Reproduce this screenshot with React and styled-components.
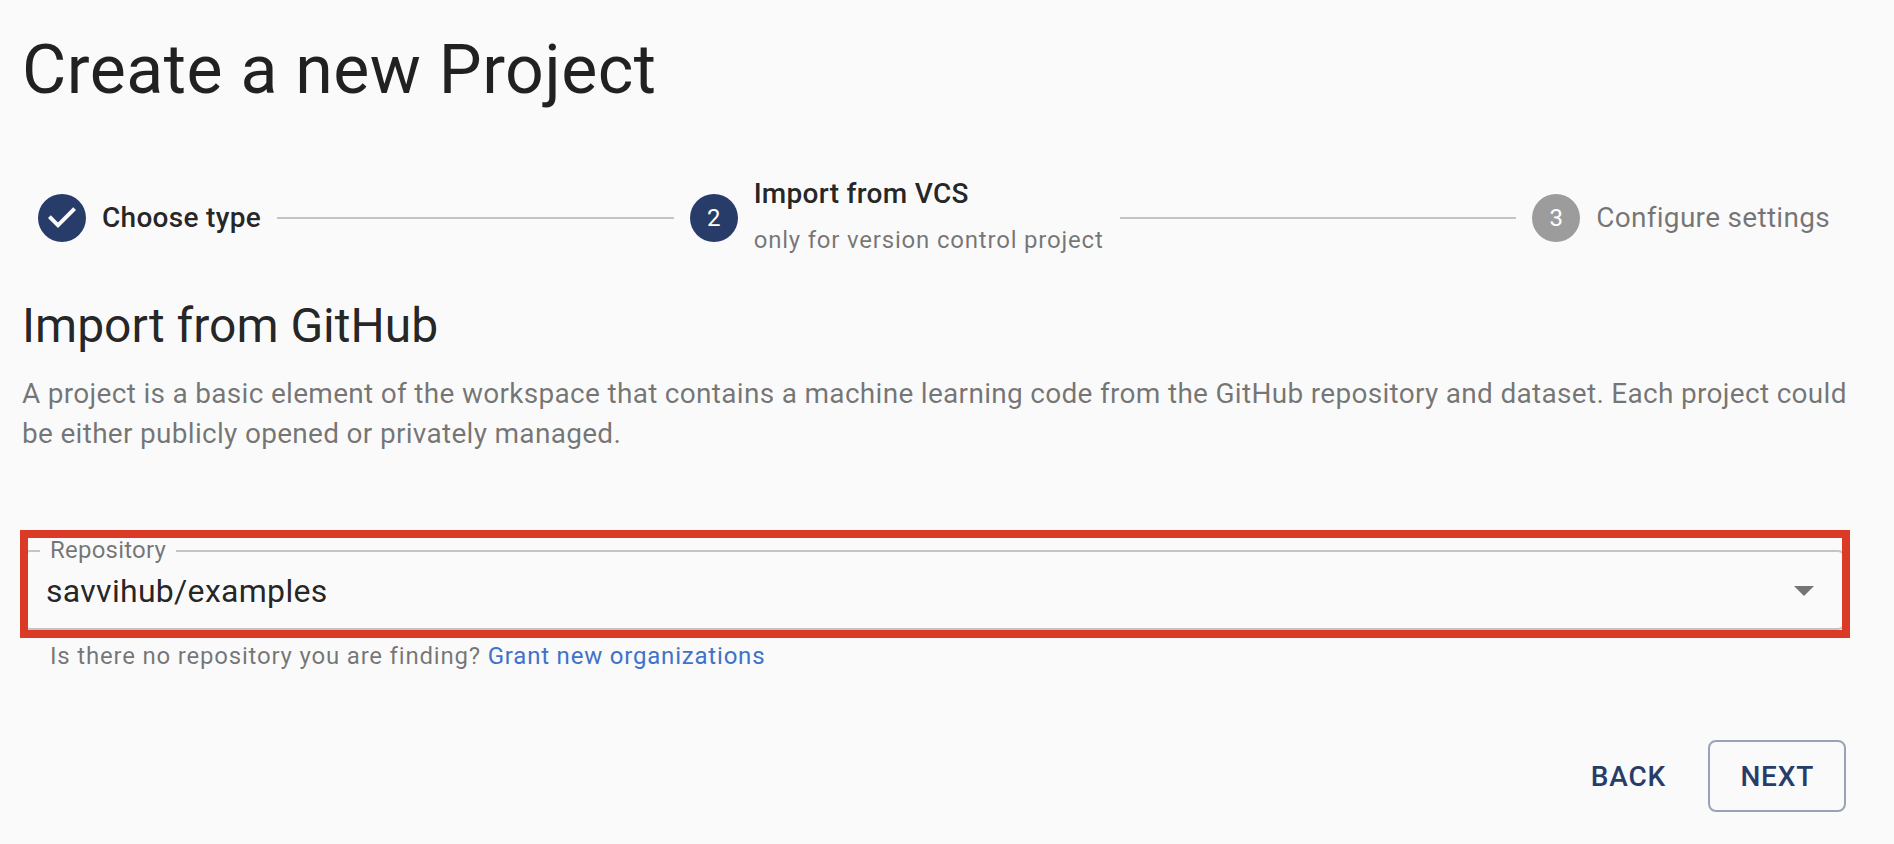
import React from "react";
import styled, { createGlobalStyle, css } from "styled-components";

const navy = "#283c69";
const line = "#c4c4c4";
const surface = "#fafafa";

const type = {
  h4: css`
    font-size: 68px;
    line-height: 84px;
    font-weight: 400;
    letter-spacing: 0.00735em;
  `,
  h5: css`
    font-size: 48px;
    line-height: 64px;
    font-weight: 400;
  `,
  body1: css`
    font-size: 32px;
    line-height: 44px;
    letter-spacing: 0.00938em;
  `,
  body2: css`
    font-size: 28px;
    line-height: 40px;
    letter-spacing: 0.01071em;
  `,
  caption: css`
    font-size: 24px;
    line-height: 40px;
    letter-spacing: 0.03333em;
  `,
};

const GlobalStyle = createGlobalStyle`
  *, *::before, *::after { box-sizing: border-box; }
  body {
    margin: 0;
    background: ${surface};
    color: rgba(0, 0, 0, 0.87);
    font-family: Roboto, "Liberation Sans", sans-serif;
    -webkit-font-smoothing: antialiased;
  }
`;

const Page = styled.main`
  padding: 28px 48px 32px 22px;
`;

const Title = styled.h1`
  ${type.h4}
  margin: 0 0 62px;
`;

const Stepper = styled.ol`
  display: flex;
  align-items: center;
  margin: 0 0 32px;
  padding: 0;
  list-style: none;
`;

const Step = styled.li`
  display: flex;
  align-items: center;
  gap: 16px;
  padding: 0 16px;
`;

const Connector = styled.li`
  flex: 1;
  height: 2px;
  background: ${line};
`;

const StepNumber = styled.span`
  flex: none;
  width: 48px;
  height: 48px;
  border-radius: 50%;
  background: ${(p) => (p.$active ? navy : "#9c9c9c")};
  color: #fff;
  font-size: 24px;
  line-height: 48px;
  text-align: center;
`;

const CheckIcon = styled.svg`
  flex: none;
  width: 48px;
  height: 48px;
  fill: ${navy};
`;

const StepLabel = styled.span`
  ${type.body2}
  display: block;
  white-space: nowrap;
  font-weight: ${(p) => (p.$active ? 500 : 400)};
  color: ${(p) => (p.$active ? "rgba(0, 0, 0, 0.87)" : "rgba(0, 0, 0, 0.54)")};
`;

const StepCaption = styled.span`
  ${type.caption}
  display: block;
  padding: 6px 0 2px;
  white-space: nowrap;
  color: rgba(0, 0, 0, 0.54);
`;

const SectionTitle = styled.h2`
  ${type.h5}
  margin: 0 0 16px;
`;

const Description = styled.p`
  ${type.body2}
  margin: 0 -16px 96px 0;
  color: rgba(0, 0, 0, 0.54);
`;

const Field = styled.div`
  position: relative;

  &::after {
    content: "";
    position: absolute;
    inset: -20px -4px -8px -2px;
    border: 8px solid #da3a26;
    pointer-events: none;
  }
`;

const FieldLabel = styled.label`
  position: absolute;
  top: -12px;
  left: 18px;
  padding: 0 10px;
  background: ${surface};
  font-size: 24px;
  line-height: 24px;
  letter-spacing: 0.00938em;
  color: rgba(0, 0, 0, 0.54);
`;

const Select = styled.select`
  ${type.body1}
  display: block;
  width: 100%;
  height: 80px;
  padding: 2px 80px 0 22px;
  border: 2px solid ${line};
  border-radius: 8px;
  background: transparent;
  color: inherit;
  font-family: inherit;
  appearance: none;
`;

const Arrow = styled.svg`
  position: absolute;
  top: 16px;
  right: 18px;
  width: 48px;
  height: 48px;
  fill: #757575;
  pointer-events: none;
`;

const Helper = styled.p`
  ${type.caption}
  margin: 6px 28px 64px;
  color: rgba(0, 0, 0, 0.54);
`;

const Link = styled.a`
  color: #3f72c8;
  text-decoration: none;
`;

const Actions = styled.div`
  display: flex;
  justify-content: flex-end;
  gap: 16px;
`;

const Button = styled.button`
  min-width: 128px;
  height: 72px;
  padding: 2px ${(p) => (p.$outlined ? 30 : 16)}px 0;
  border: ${(p) => (p.$outlined ? "2px solid #98a3b9" : "0")};
  border-radius: 8px;
  background: transparent;
  color: ${navy};
  font-family: inherit;
  font-size: 28px;
  font-weight: 500;
  line-height: 48px;
  letter-spacing: 0.02857em;
  text-transform: uppercase;
  cursor: pointer;
`;

export default function App() {
  return (
    <>
      <GlobalStyle />
      <Page>
        <Title>Create a new Project</Title>

        <Stepper>
          <Step>
            <CheckIcon viewBox="0 0 24 24" aria-hidden="true">
              <path d="M12 0a12 12 0 1 0 0 24 12 12 0 0 0 0-24zm-2 17l-5-5 1.4-1.4 3.6 3.6 7.6-7.6L19 8l-9 9z" />
            </CheckIcon>
            <StepLabel $active>Choose type</StepLabel>
          </Step>
          <Connector aria-hidden="true" />
          <Step aria-current="step">
            <StepNumber $active>2</StepNumber>
            <div>
              <StepLabel $active>Import from VCS</StepLabel>
              <StepCaption>only for version control project</StepCaption>
            </div>
          </Step>
          <Connector aria-hidden="true" />
          <Step>
            <StepNumber>3</StepNumber>
            <StepLabel>Configure settings</StepLabel>
          </Step>
        </Stepper>

        <SectionTitle>Import from GitHub</SectionTitle>
        <Description>
          A project is a basic element of the workspace that contains a machine
          learning code from the GitHub repository and dataset. Each project
          could be either publicly opened or privately managed.
        </Description>

        <Field>
          <Select id="repository" defaultValue="savvihub/examples">
            <option>savvihub/examples</option>
          </Select>
          <FieldLabel htmlFor="repository">Repository</FieldLabel>
          <Arrow viewBox="0 0 24 24" aria-hidden="true">
            <path d="M7 10l5 5 5-5z" />
          </Arrow>
        </Field>
        <Helper>
          Is there no repository you are finding?{" "}
          <Link href="#organizations">Grant new organizations</Link>
        </Helper>

        <Actions>
          <Button type="button">Back</Button>
          <Button type="button" $outlined>
            Next
          </Button>
        </Actions>
      </Page>
    </>
  );
}
